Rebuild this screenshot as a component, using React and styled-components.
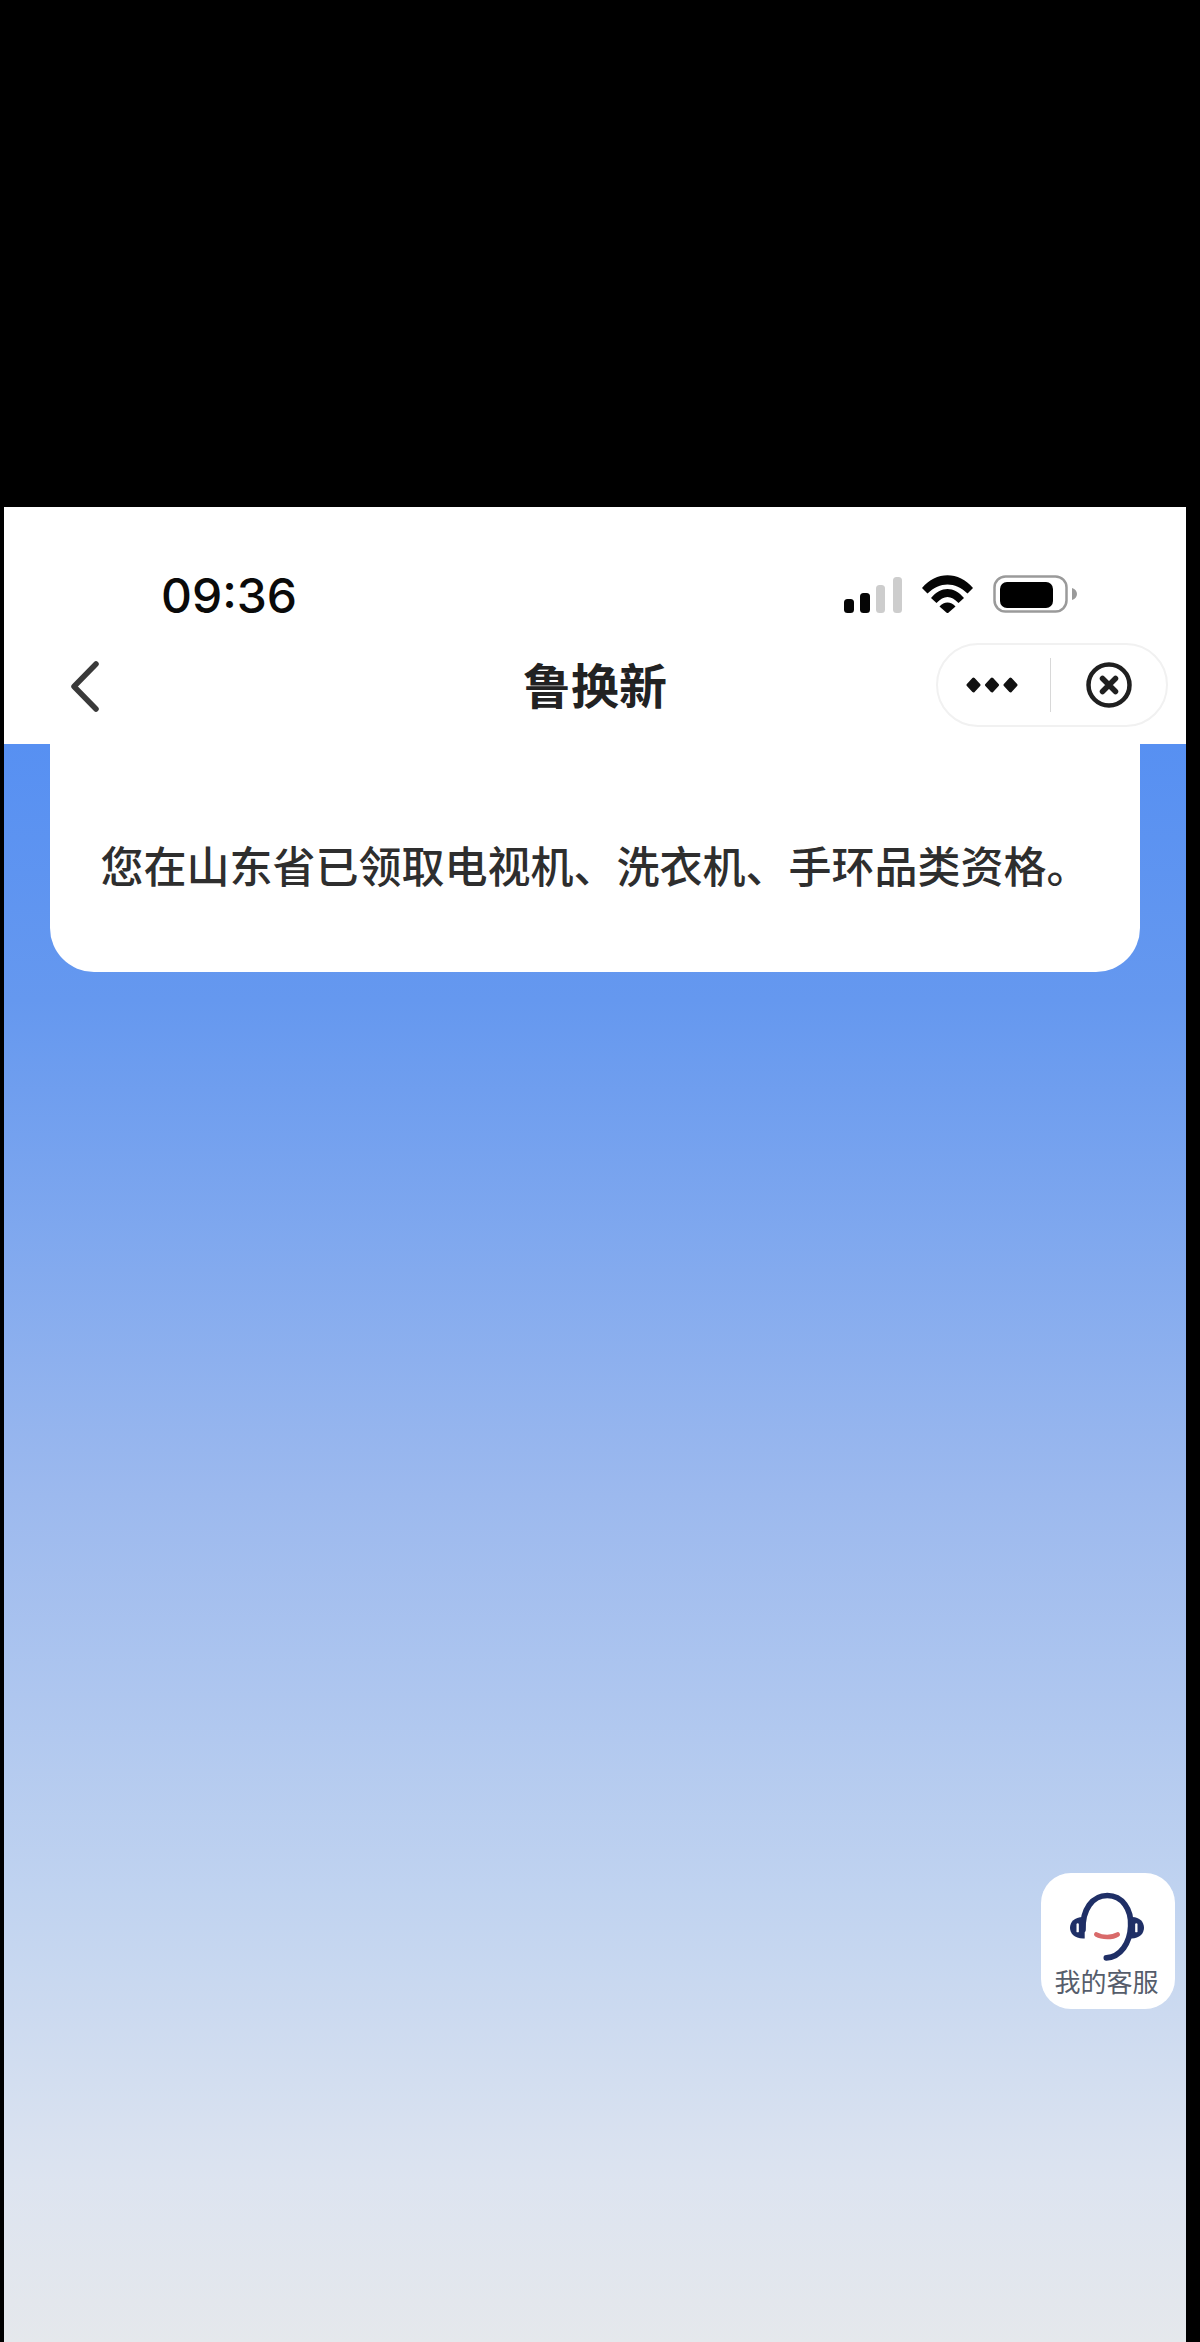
import React from "react";
import styled, { createGlobalStyle } from "styled-components";

const GlobalStyle = createGlobalStyle`
  html, body {
    margin: 0;
    padding: 0;
    background: #000;
    overflow: hidden;
  }
  body {
    font-family: "Noto Sans CJK SC", "Liberation Sans", sans-serif;
  }
`;

const Page = styled.div`
  width: 1200px;
  height: 2342px;
  padding: 507px 14px 0 4px;
  box-sizing: border-box;
  background: #000;
`;

const Screen = styled.div`
  position: relative;
  height: 100%;
  display: flex;
  flex-direction: column;
  background: #fff;
`;

const Header = styled.header`
  flex: none;
  position: relative;
  z-index: 2;
  background: #fff;
`;

const StatusBar = styled.div`
  height: 133px;
  display: flex;
  align-items: flex-start;
  justify-content: space-between;
  padding: 65px 109px 0 157px;
  box-sizing: border-box;
`;

const Time = styled.span`
  font-family: Inter, "Liberation Sans", sans-serif;
  font-size: 48px;
  line-height: 48px;
  font-weight: 500;
  color: #0a0a0a;
`;

const StatusIcons = styled.div`
  display: flex;
  align-items: flex-end;
  gap: 20px;
  margin-top: 3px;
`;

const NavBar = styled.nav`
  height: 104px;
  display: grid;
  grid-template-columns: minmax(0, 1fr) auto minmax(0, 1fr);
  align-items: center;
  padding: 0 18px;
  box-sizing: border-box;
`;

const BackIcon = styled.svg`
  display: block;
  margin: 0 0 12px 49px;
`;

const Title = styled.h1`
  margin: 0 0 19px;
  font-size: 48px;
  line-height: 60px;
  font-weight: 700;
  color: #222;
`;

const Capsule = styled.div`
  justify-self: end;
  width: 232px;
  height: 84px;
  margin-bottom: 15px;
  display: flex;
  align-items: center;
  box-sizing: border-box;
  border: 2px solid #f1f1f1;
  border-radius: 42px;
  background: #fff;
`;

const CapsuleSide = styled.div`
  flex: ${(p) => (p.$wide ? "0 0 113px" : "1")};
  height: 54px;
  padding-right: ${(p) => (p.$wide ? "4px" : "0")};
  display: flex;
  align-items: center;
  justify-content: center;
  box-sizing: border-box;
  border-right: ${(p) => (p.$wide ? "1px solid #d8d8d8" : "none")};
`;

const Content = styled.main`
  flex: 1;
  padding: 0 46px;
  background: linear-gradient(
    180deg,
    #5790f2 0%,
    #6598ef 16%,
    #9cb9ee 47%,
    #c0d3f0 72%,
    #dde4f0 90%,
    #e5e8ec 100%
  );
`;

const Notice = styled.section`
  height: 228px;
  padding-top: 92px;
  box-sizing: border-box;
  background: #fff;
  border-radius: 0 0 44px 44px;
  text-align: center;
`;

const NoticeText = styled.p`
  margin: 0;
  font-size: 43px;
  line-height: 56px;
  font-weight: 500;
  white-space: nowrap;
  color: #2e2e2e;
`;

const ServiceButton = styled.button`
  position: absolute;
  right: 11px;
  bottom: 333px;
  width: 134px;
  height: 136px;
  padding: 18px 3px 0 0;
  display: flex;
  flex-direction: column;
  align-items: center;
  box-sizing: border-box;
  border: 0;
  border-radius: 30px;
  background: #fff;
  font-family: inherit;
`;

const ServiceLabel = styled.span`
  margin-top: 1px;
  font-size: 26px;
  line-height: 34px;
  white-space: nowrap;
  color: #565d6b;
`;

const SignalIcon = () => (
  <svg width="58" height="36" viewBox="0 0 58 36">
    <rect x="0" y="22" width="10" height="14" rx="3.5" fill="#050505" />
    <rect x="16" y="16" width="10" height="20" rx="3.5" fill="#050505" />
    <rect x="32" y="8" width="9" height="28" rx="3.5" fill="#cdcdcd" />
    <rect x="49" y="0" width="9" height="36" rx="3.5" fill="#cdcdcd" />
  </svg>
);

const WifiIcon = () => (
  <svg width="51" height="38" viewBox="0 0 51 38">
    <path d="M0 13 C14 -4 37 -4 51 13 L45.5 18.5 C33 6.5 18 6.5 5.5 18.5 Z" fill="#050505" />
    <path d="M9 23 C19 11 32 11 42 23 L36.5 28 C29 20 22 20 14.5 28 Z" fill="#050505" />
    <path d="M17.5 31.5 C22 26 29 26 33.5 31.5 L25.5 38.5 Z" fill="#050505" />
  </svg>
);

const BatteryIcon = () => (
  <svg width="84" height="38" viewBox="0 0 84 38">
    <rect x="1.5" y="1.5" width="72" height="35" rx="11" fill="none" stroke="#9a9a9a" strokeWidth="2.5" />
    <rect x="7" y="7" width="53" height="26" rx="7" fill="#000" />
    <path d="M79 13 C82.5 14 84 16.5 84 19 C84 21.5 82.5 24 79 25 Z" fill="#9a9a9a" />
  </svg>
);

const ChevronLeft = () => (
  <BackIcon width="28" height="51" viewBox="0 0 28 51">
    <path d="M25 3 L3 25.5 L25 48" fill="none" stroke="#3a3a3a" strokeWidth="5.5" strokeLinecap="round" strokeLinejoin="round" />
  </BackIcon>
);

const DotsIcon = () => (
  <svg width="52" height="16" viewBox="0 0 52 16">
    <path d="M7.5 2 L13 8 L7.5 14 L2 8 Z" fill="#111" stroke="#111" strokeWidth="3" strokeLinejoin="round" />
    <path d="M26 2 L31.5 8 L26 14 L20.5 8 Z" fill="#111" stroke="#111" strokeWidth="3" strokeLinejoin="round" />
    <path d="M44.5 2 L50 8 L44.5 14 L39 8 Z" fill="#111" stroke="#111" strokeWidth="3" strokeLinejoin="round" />
  </svg>
);

const CloseIcon = () => (
  <svg width="46" height="46" viewBox="0 0 46 46">
    <circle cx="23" cy="23" r="20.5" fill="none" stroke="#1f1f1f" strokeWidth="4.5" />
    <path d="M16.5 16.5 L29.5 29.5 M29.5 16.5 L16.5 29.5" stroke="#1f1f1f" strokeWidth="5.5" strokeLinecap="round" />
  </svg>
);

const HeadsetIcon = () => (
  <svg width="75" height="72" viewBox="150 90 225 215">
    <path
      d="M192 205 C190 145 220 103 265 103 C310 103 338 145 335 195 C333 245 305 288 262 290"
      fill="none"
      stroke="#1f2f66"
      strokeWidth="17"
      strokeLinecap="round"
    />
    <path d="M197 168 C168 166 153 182 153 200 C153 218 168 234 197 232 Z" fill="#1f2f66" />
    <path d="M176 190 L176 210" stroke="#fff" strokeWidth="7" strokeLinecap="round" />
    <path d="M336 168 C360 166 375 182 375 200 C375 218 360 234 333 232 Z" fill="#1f2f66" />
    <path d="M352 190 L352 210" stroke="#fff" strokeWidth="7" strokeLinecap="round" />
    <path d="M232 220 C250 230 280 230 296 220" fill="none" stroke="#d96a6a" strokeWidth="14" strokeLinecap="round" />
  </svg>
);

export default function App() {
  return (
    <Page>
      <GlobalStyle />
      <Screen>
        <Header>
          <StatusBar>
            <Time>09:36</Time>
            <StatusIcons>
              <SignalIcon />
              <WifiIcon />
              <BatteryIcon />
            </StatusIcons>
          </StatusBar>
          <NavBar>
            <ChevronLeft />
            <Title>鲁换新</Title>
            <Capsule>
              <CapsuleSide $wide>
                <DotsIcon />
              </CapsuleSide>
              <CapsuleSide>
                <CloseIcon />
              </CapsuleSide>
            </Capsule>
          </NavBar>
        </Header>
        <Content>
          <Notice>
            <NoticeText>您在山东省已领取电视机、洗衣机、手环品类资格。</NoticeText>
          </Notice>
        </Content>
        <ServiceButton>
          <HeadsetIcon />
          <ServiceLabel>我的客服</ServiceLabel>
        </ServiceButton>
      </Screen>
    </Page>
  );
}
